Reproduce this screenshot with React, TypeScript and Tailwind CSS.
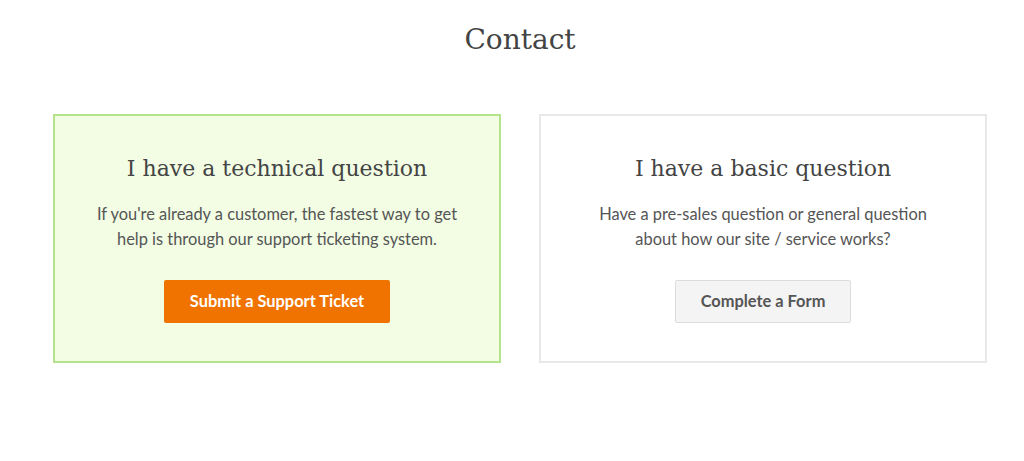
export default function App() {
  return (
    <div className="min-h-[461px] w-[1024px] bg-white pl-[53px] pr-[37px] pt-[20px] font-['Lato',sans-serif]">
      <h1 className="text-center font-['DejaVu_Serif',serif] text-[28px] font-normal leading-[40px] text-[#444]">
        Contact
      </h1>
      <div className="mt-[54px] flex gap-[38px]">
        <div className="flex h-[249px] w-[448px] flex-col items-center border-2 border-[#b3e48b] bg-[#f2fde4] pt-[38px]">
          <h2 className="font-['DejaVu_Serif',serif] text-[22px] leading-[30px] text-[#444]">
            I have a technical question
          </h2>
          <p className="mt-[17px] text-center text-[16.4px] leading-[25px] text-[#555]">
            If you're already a customer, the fastest way to get
            <br />
            help is through our support ticketing system.
          </p>
          <button
            type="button"
            className="mt-[29px] h-[43px] w-[226px] rounded-[2px] bg-[#f07300] text-[16.4px] font-bold text-white"
          >
            Submit a Support Ticket
          </button>
        </div>
        <div className="flex h-[249px] w-[448px] flex-col items-center border-2 border-[#e8e8e8] bg-white pt-[38px]">
          <h2 className="font-['DejaVu_Serif',serif] text-[22px] leading-[30px] text-[#444]">
            I have a basic question
          </h2>
          <p className="mt-[17px] text-center text-[16.4px] leading-[25px] text-[#555]">
            Have a pre-sales question or general question
            <br />
            about how our site / service works?
          </p>
          <button
            type="button"
            className="mt-[29px] h-[43px] w-[176px] rounded-[2px] border border-[#dcdcdc] bg-[#f4f4f4] text-[16.4px] font-bold text-[#555]"
          >
            Complete a Form
          </button>
        </div>
      </div>
    </div>
  );
}
